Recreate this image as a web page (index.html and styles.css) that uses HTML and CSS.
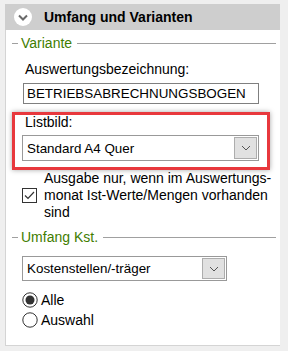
FILE: index.html
```html
<!DOCTYPE html>
<html lang="de">

<head>
    <meta charset="UTF-8">
    <meta name="viewport" content="width=device-width, initial-scale=1.0">
    <title>Umfang und Varianten</title>
    <link rel="stylesheet" href="styles.css">
</head>

<body>
    <div class="panel">
        <div class="panel-head">
            <span class="toggle">
                <svg width="18" height="18" viewBox="0 0 18 18">
                    <circle cx="9" cy="9" r="9" fill="#fff" />
                    <path d="M5 7.5 L9 11.5 L13 7.5" fill="none" stroke="#6a6a6a" stroke-width="2" />
                </svg>
            </span>
            <span class="panel-title">Umfang und Varianten</span>
        </div>

        <div class="panel-body">
            <!-- Variante -->
            <div class="group-title"><span class="dash"></span><span class="group-text">Variante</span><span class="rule"></span></div>

            <div class="label label-first">Auswertungsbezeichnung:</div>
            <div class="textbox">BETRIEBSABRECHNUNGSBOGEN</div>

            <div class="highlight">
                <div class="label label-small">Listbild:</div>
                <div class="combo combo-wide">
                    <span class="combo-text">Standard A4 Quer</span>
                    <span class="combo-btn">
                        <svg width="10" height="6" viewBox="0 0 10 6">
                            <path d="M1 1 L5 5 L9 1" fill="none" stroke="#555" stroke-width="1" />
                        </svg>
                    </span>
                </div>
            </div>

            <div class="check-row">
                <span class="checkbox">
                    <svg width="15" height="15" viewBox="0 0 15 15">
                        <rect x="0.5" y="0.5" width="14" height="14" fill="#fff" stroke="#333" />
                        <path d="M3 7.5 L6 10.5 L12 4" fill="none" stroke="#333" stroke-width="1.2" />
                    </svg>
                </span>
                <span class="check-text">Ausgabe nur, wenn im Auswertungs-<br>monat Ist-Werte/Mengen vorhanden<br>sind</span>
            </div>

            <!-- Umfang Kst. -->
            <div class="group-title group-second"><span class="dash"></span><span class="group-text">Umfang Kst.</span><span class="rule"></span></div>

            <div class="combo combo-narrow">
                <span class="combo-text">Kostenstellen/-träger</span>
                <span class="combo-btn">
                    <svg width="10" height="6" viewBox="0 0 10 6">
                        <path d="M1 1 L5 5 L9 1" fill="none" stroke="#555" stroke-width="1" />
                    </svg>
                </span>
            </div>

            <div class="radio-row radio-first">
                <svg width="16" height="16" viewBox="0 0 16 16">
                    <circle cx="8" cy="8" r="7.2" fill="#fff" stroke="#333" />
                    <circle cx="8" cy="8" r="4.5" fill="#333" />
                </svg>
                <span>Alle</span>
            </div>
            <div class="radio-row">
                <svg width="16" height="16" viewBox="0 0 16 16">
                    <circle cx="8" cy="8" r="7.2" fill="#fff" stroke="#333" />
                </svg>
                <span>Auswahl</span>
            </div>
        </div>
    </div>
</body>

</html>
```

FILE: styles.css
```css
body {
    margin: 0;
    padding-top: 4px;
    background-color: #efefef;
    font-family: "Liberation Sans", Arial, sans-serif;
    font-size: 14px;
    color: #000;
}

.panel {
    margin-left: 5px;
    width: 275px;
}

.panel-head {
    display: flex;
    align-items: center;
    height: 26px;
    padding-left: 9px;
    background-color: #cecece;
}

.toggle {
    display: flex;
    width: 18px;
    height: 18px;
}

.panel-title {
    margin-left: 12px;
    font-weight: bold;
    font-size: 14px;
}

.panel-body {
    height: 315px;
    padding: 0 4px 0 0;
    background-color: #fff;
    border-left: 1px solid #d4d4d4;
    border-bottom: 1px solid #d4d4d4;
    overflow: hidden;
}

/* group header like a fieldset legend */
.group-title {
    display: flex;
    align-items: center;
    height: 16px;
    margin-top: 5px;
    line-height: 16px;
}

.group-second {
    margin-top: 8px;
}

.dash {
    width: 6px;
    height: 1px;
    margin-left: 6px;
    background-color: #a0a0a0;
}

.group-text {
    margin: 0 5px 0 3px;
    color: #3f7d00;
}

.rule {
    flex: 1;
    height: 1px;
    background-color: #a0a0a0;
}

.label {
    line-height: 16px;
    margin-left: 19px;
}

.label-first {
    margin-top: 10px;
}

.label-small {
    line-height: 14px;
    margin-left: 3px;
}

.textbox {
    box-sizing: border-box;
    width: 236px;
    height: 21px;
    margin: 6px 0 0 17px;
    padding: 0 3px;
    border: 1px solid #7f7f7f;
    font-size: 13.4px;
    line-height: 19px;
    white-space: nowrap;
}

.highlight {
    box-sizing: border-box;
    width: 258px;
    height: 58px;
    margin: 8px 0 0 6px;
    padding: 0 0 6px 7px;
    border: 3px solid #e8383d;
    box-shadow: 0 0 5px rgba(0, 0, 0, 0.35);
}

.combo {
    box-sizing: border-box;
    display: flex;
    align-items: center;
    justify-content: space-between;
    height: 26px;
    padding: 1px;
    border: 1px solid #999;
    font-size: 13.4px;
}

.combo-wide {
    width: 237px;
    margin-top: 6px;
}

.combo-narrow {
    width: 205px;
    height: 25px;
    margin: 11px 0 0 16px;
}

.combo-text {
    padding-left: 3px;
}

.combo-btn {
    box-sizing: border-box;
    display: flex;
    align-items: center;
    justify-content: center;
    width: 23px;
    height: 100%;
    background-color: #e1e1e1;
    border: 1px solid #adadad;
}

.check-row {
    display: flex;
    align-items: center;
    margin-left: 16px;
}

.checkbox {
    display: flex;
    width: 15px;
    height: 15px;
}

.check-text {
    margin-left: 7px;
    line-height: 17px;
    white-space: nowrap;
}

.radio-row {
    display: flex;
    align-items: center;
    height: 16px;
    margin: 4px 0 0 16px;
    line-height: 16px;
}

.radio-row span {
    margin-left: 3px;
}

.radio-first {
    margin-top: 11px;
}
```
